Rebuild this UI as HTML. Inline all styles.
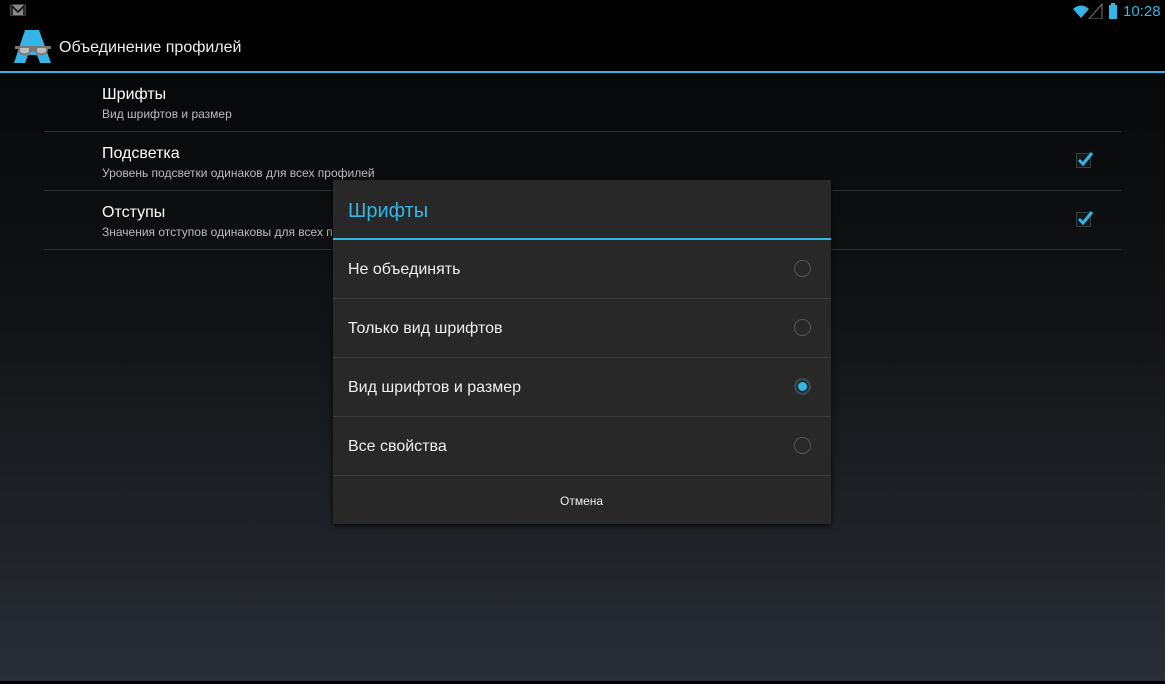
<!DOCTYPE html>
<html><head><meta charset="utf-8"><style>
*{margin:0;padding:0;box-sizing:border-box}
body{width:1165px;height:684px;overflow:hidden;font-family:"Liberation Sans","DejaVu Sans",sans-serif;background:#000;position:relative;color:#fff}
.bg{position:absolute;left:0;top:73px;width:1165px;height:608px;background:linear-gradient(#070809,#0e1012 30%,#1b1e22 65%,#292d36)}
.bot{position:absolute;left:0;top:681px;width:1165px;height:3px;background:#000}
.abar{position:absolute;left:0;top:71px;width:1165px;height:2px;background:#33b5e5}
.t{position:absolute;white-space:nowrap}
.sep{position:absolute;left:44px;width:1077px;height:1px;background:#2e3033}
.cb{position:absolute;left:1076px;width:15px;height:15px;border:1px solid #3a3d40;background:#15171a}
.dlg{position:absolute;left:333px;top:180px;width:498px;height:344px;background:#282828;box-shadow:0 2px 6px rgba(0,0,0,.8)}
.dl{position:absolute;left:0;width:498px;height:1px;background:#3d3d3d}
.rad{position:absolute;left:461px;width:17px;height:17px;border-radius:50%;border:1px solid #555}
</style></head><body>
<div class="bg"></div><div class="bot"></div>
<svg class="t" style="left:10px;top:4px" width="16" height="12"><rect x="0.5" y="0.5" width="15" height="11" fill="#888"/><path d="M2 11V2l6 6 6-6v9" stroke="#111" stroke-width="1.6" fill="none"/></svg>
<svg class="t" style="left:1072px;top:3px" width="50" height="16"><path d="M1 6a11 11 0 0 1 16 0L9 15z" fill="#33b5e5"/><path d="M30 1v15H17z" fill="none" stroke="#777" stroke-width="1"/><rect x="37" y="2" width="8" height="14" fill="#33b5e5"/><rect x="39" y="0" width="4" height="2" fill="#33b5e5"/></svg>
<div class="t" style="left:1123px;top:3px;font-size:15px;color:#33b5e5">10:28</div>
<svg class="t" style="left:12px;top:29px" width="42" height="36"><path d="M13 1h14l12 33h-11l-3-8h-9l-3 8H2z" fill="#33b5e5"/><path d="M3 17h36v3h-3c0 6-6 7-9 6l-6-4-6 4c-4 1-9 0-9-6H3z" fill="#777"/><path d="M8 19h9v4c-2 2-8 2-9-1zM25 19h9v3c-1 3-7 3-9 1z" fill="#bbb"/></svg>
<div class="t" style="left:59px;top:39px;font-size:16px;color:#eee">Объединение профилей</div>
<div class="abar"></div>
<div class="t" style="left:102px;top:86px;font-size:16px">Шрифты</div>
<div class="t" style="left:102px;top:107px;font-size:12px;color:#bbb">Вид шрифтов и размер</div>
<div class="sep" style="top:131px"></div>
<div class="t" style="left:102px;top:145px;font-size:16px">Подсветка</div>
<div class="t" style="left:102px;top:166px;font-size:12px;color:#bbb">Уровень подсветки одинаков для всех профилей</div>
<div class="cb" style="top:153px"></div>
<svg class="t" style="left:1076px;top:151px" width="18" height="16"><path d="M3 9l4 4 9-11" stroke="#33b5e5" stroke-width="3" fill="none"/></svg>
<div class="sep" style="top:190px"></div>
<div class="t" style="left:102px;top:204px;font-size:16px">Отступы</div>
<div class="t" style="left:102px;top:225px;font-size:12px;color:#bbb">Значения отступов одинаковы для всех профилей</div>
<div class="cb" style="top:212px"></div>
<svg class="t" style="left:1076px;top:210px" width="18" height="16"><path d="M3 9l4 4 9-11" stroke="#33b5e5" stroke-width="3" fill="none"/></svg>
<div class="sep" style="top:249px"></div>
<div class="dlg">
<div class="t" style="left:15px;top:20px;font-size:20px;color:#33b5e5">Шрифты</div>
<div class="dl" style="top:58px;height:2px;background:#33b5e5"></div>
<div class="t" style="left:15px;top:81px;font-size:16px;color:#eee">Не объединять</div>
<div class="rad" style="top:80px"></div>
<div class="dl" style="top:118px"></div>
<div class="t" style="left:15px;top:140px;font-size:16px;color:#eee">Только вид шрифтов</div>
<div class="rad" style="top:139px"></div>
<div class="dl" style="top:177px"></div>
<div class="t" style="left:15px;top:199px;font-size:16px;color:#eee">Вид шрифтов и размер</div>
<div class="rad" style="top:198px;border:2px solid #3b4a52;background:#33b5e5;box-shadow:inset 0 0 0 2px #282828"></div>
<div class="dl" style="top:236px"></div>
<div class="t" style="left:15px;top:258px;font-size:16px;color:#eee">Все свойства</div>
<div class="rad" style="top:257px"></div>
<div class="dl" style="top:295px"></div>
<div class="t" style="left:227px;top:314px;font-size:12px;color:#eee">Отмена</div>
</div>
</body></html>
